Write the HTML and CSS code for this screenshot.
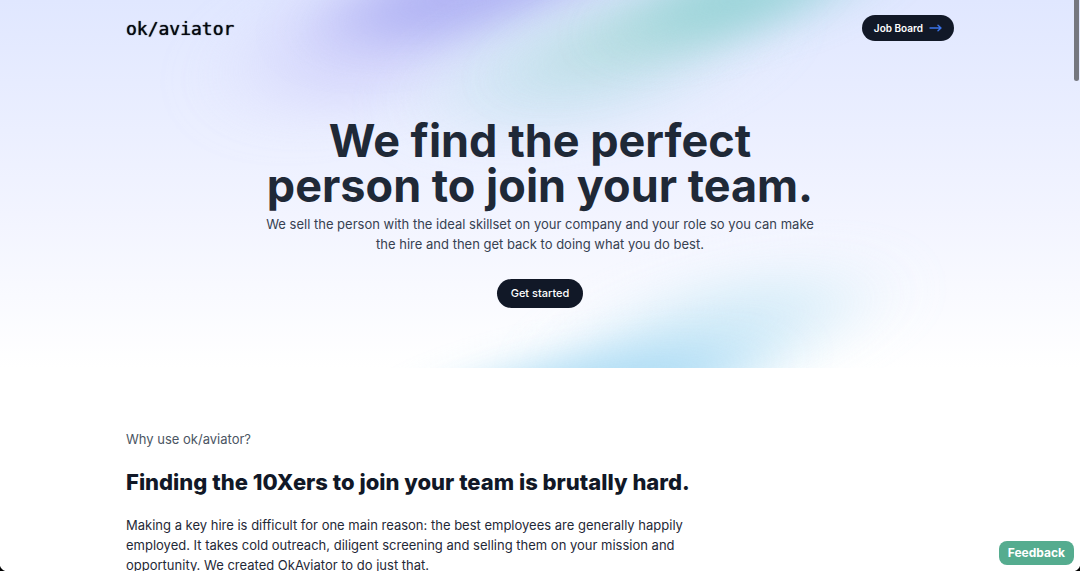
FILE: index.html
```html
<!DOCTYPE html>
<html lang="en">
<head>
<meta charset="utf-8">
<meta name="viewport" content="width=device-width, initial-scale=1">
<title>ok/aviator</title>
<link rel="stylesheet" href="styles.css">
</head>
<body>
<div class="hero">
  <svg class="hero-glow" viewBox="0 0 1080 368" preserveAspectRatio="xMidYMax slice" aria-hidden="true">
    <defs>
      <filter id="blur-wide" x="-60%" y="-200%" width="220%" height="500%"><feGaussianBlur stdDeviation="50 24"/></filter>
      <filter id="blur-mid" x="-60%" y="-200%" width="220%" height="500%"><feGaussianBlur stdDeviation="44 20"/></filter>
    </defs>
    <ellipse cx="370" cy="42" rx="110" ry="60" transform="rotate(-16 370 42)" fill="#d2d2fb" opacity=".75" filter="url(#blur-wide)"/>
    <ellipse cx="480" cy="-10" rx="140" ry="44" transform="rotate(-14 480 -10)" fill="#acaef3" opacity=".85" filter="url(#blur-mid)"/>
    <ellipse cx="590" cy="62" rx="140" ry="56" transform="rotate(-14 590 62)" fill="#cae3f1" opacity=".85" filter="url(#blur-wide)"/>
    <ellipse cx="660" cy="28" rx="120" ry="30" transform="rotate(-18 660 28)" fill="#b0dbdb" opacity=".7" filter="url(#blur-mid)"/>
    <ellipse cx="750" cy="-6" rx="110" ry="36" transform="rotate(-16 750 -6)" fill="#92d2d5" opacity=".8" filter="url(#blur-mid)"/>
    <ellipse cx="720" cy="330" rx="130" ry="44" transform="rotate(-14 720 330)" fill="#cde9f7" opacity=".85" filter="url(#blur-wide)"/>
    <ellipse cx="590" cy="388" rx="160" ry="34" transform="rotate(-10 590 388)" fill="#a8daf4" opacity=".9" filter="url(#blur-mid)"/>
  </svg>
  <header class="container site-header">
    <a class="logo" href="#">ok/aviator</a>
    <a class="pill" href="#jobs">Job Board
      <svg class="arrow" viewBox="0 0 13 8" aria-hidden="true"><path d="M1 4h11M9 1.2L12 4 9 6.8"/></svg>
    </a>
  </header>
  <section class="intro">
    <h1 class="title">We find the perfect person to join your team.</h1>
    <p class="lead">We sell the person with the ideal skillset on your company and your role so you can make the hire and then get back to doing what you do best.</p>
    <a class="pill pill-large" href="#start">Get started</a>
  </section>
</div>
<main class="container why">
  <p class="eyebrow">Why use ok/aviator?</p>
  <h2 class="subtitle">Finding the 10Xers to join your team is brutally hard.</h2>
  <p class="copy">Making a key hire is difficult for one main reason: the best employees are generally happily employed. It takes cold outreach, diligent screening and selling them on your mission and opportunity. We created OkAviator to do just that.</p>
</main>
<button class="feedback" type="button">Feedback</button>
<div class="scroll-thumb"></div>
<div class="window-corners"></div>
</body>
</html>
```
FILE: styles.css
```css
* { box-sizing: border-box; }

html { scrollbar-width: none; }

body {
  margin: 0;
  background: #fff;
  color: #111827;
  font-family: Inter, "Liberation Sans", sans-serif;
  font-size: 13px;
}

h1, h2, p { margin: 0; }

.container {
  width: 100%;
  max-width: 864px;
  margin: 0 auto;
  padding: 0 18px;
}

.hero {
  position: relative;
  overflow: hidden;
  padding-bottom: 60px;
  background: linear-gradient(#e0e7ff, #f2f4ff 58%, #fff);
}

.hero-glow {
  position: absolute;
  inset: 0;
  width: 100%;
  height: 100%;
}

.site-header {
  position: relative;
  display: flex;
  align-items: center;
  justify-content: space-between;
  height: 56px;
}

.logo {
  color: #05080f;
  font-family: "DejaVu Sans Mono", monospace;
  font-size: 18px;
  text-decoration: none;
  text-shadow: 0 0 1px #05080f;
}

.pill {
  display: inline-flex;
  align-items: center;
  gap: 6px;
  padding: 0 12px;
  border-radius: 16px;
  background: #111827;
  color: #fff;
  font-size: 10px;
  font-weight: 600;
  line-height: 26px;
  text-decoration: none;
}

.pill-large {
  padding: 0 14px;
  font-size: 11px;
  font-weight: 500;
  line-height: 29px;
}

.arrow {
  width: 13px;
  height: 8px;
  fill: none;
  stroke: #3b73e8;
  stroke-width: 1.4;
  stroke-linecap: round;
  stroke-linejoin: round;
}

.intro {
  position: relative;
  display: flex;
  flex-direction: column;
  align-items: center;
  padding: 62px 18px 0;
  text-align: center;
}

.title {
  max-width: 576px;
  color: #1f2937;
  font-size: 45px;
  font-weight: 700;
  line-height: 45px;
}

.lead {
  max-width: 560px;
  margin: 6px 0 25px;
  color: #374151;
  line-height: 20px;
}

.why { padding-top: 61px; }

.eyebrow {
  color: #4b5563;
  line-height: 20px;
}

.subtitle {
  margin: 18px 0;
  font-size: 22px;
  font-weight: 800;
  line-height: 30px;
}

.copy {
  max-width: 576px;
  color: #1f2937;
  line-height: 20px;
}

.feedback {
  position: fixed;
  right: 6px;
  bottom: 6px;
  height: 24px;
  padding: 0 9px;
  border: 0;
  border-radius: 8px;
  background: #55ac8f;
  color: #fff;
  font: 700 12px/24px Inter, sans-serif;
}

.scroll-thumb {
  position: fixed;
  top: 0;
  right: 1px;
  width: 5px;
  height: 81px;
  border-radius: 0 0 3px 3px;
  background: #75777f;
}

.window-corners {
  position: fixed;
  inset: auto 0 0;
  height: 8px;
  background:
    radial-gradient(circle at 100% 0, transparent 8px, #000 9px) left / 8px 8px no-repeat,
    radial-gradient(circle at 0 0, transparent 8px, #000 9px) right / 8px 8px no-repeat;
  pointer-events: none;
}
```
